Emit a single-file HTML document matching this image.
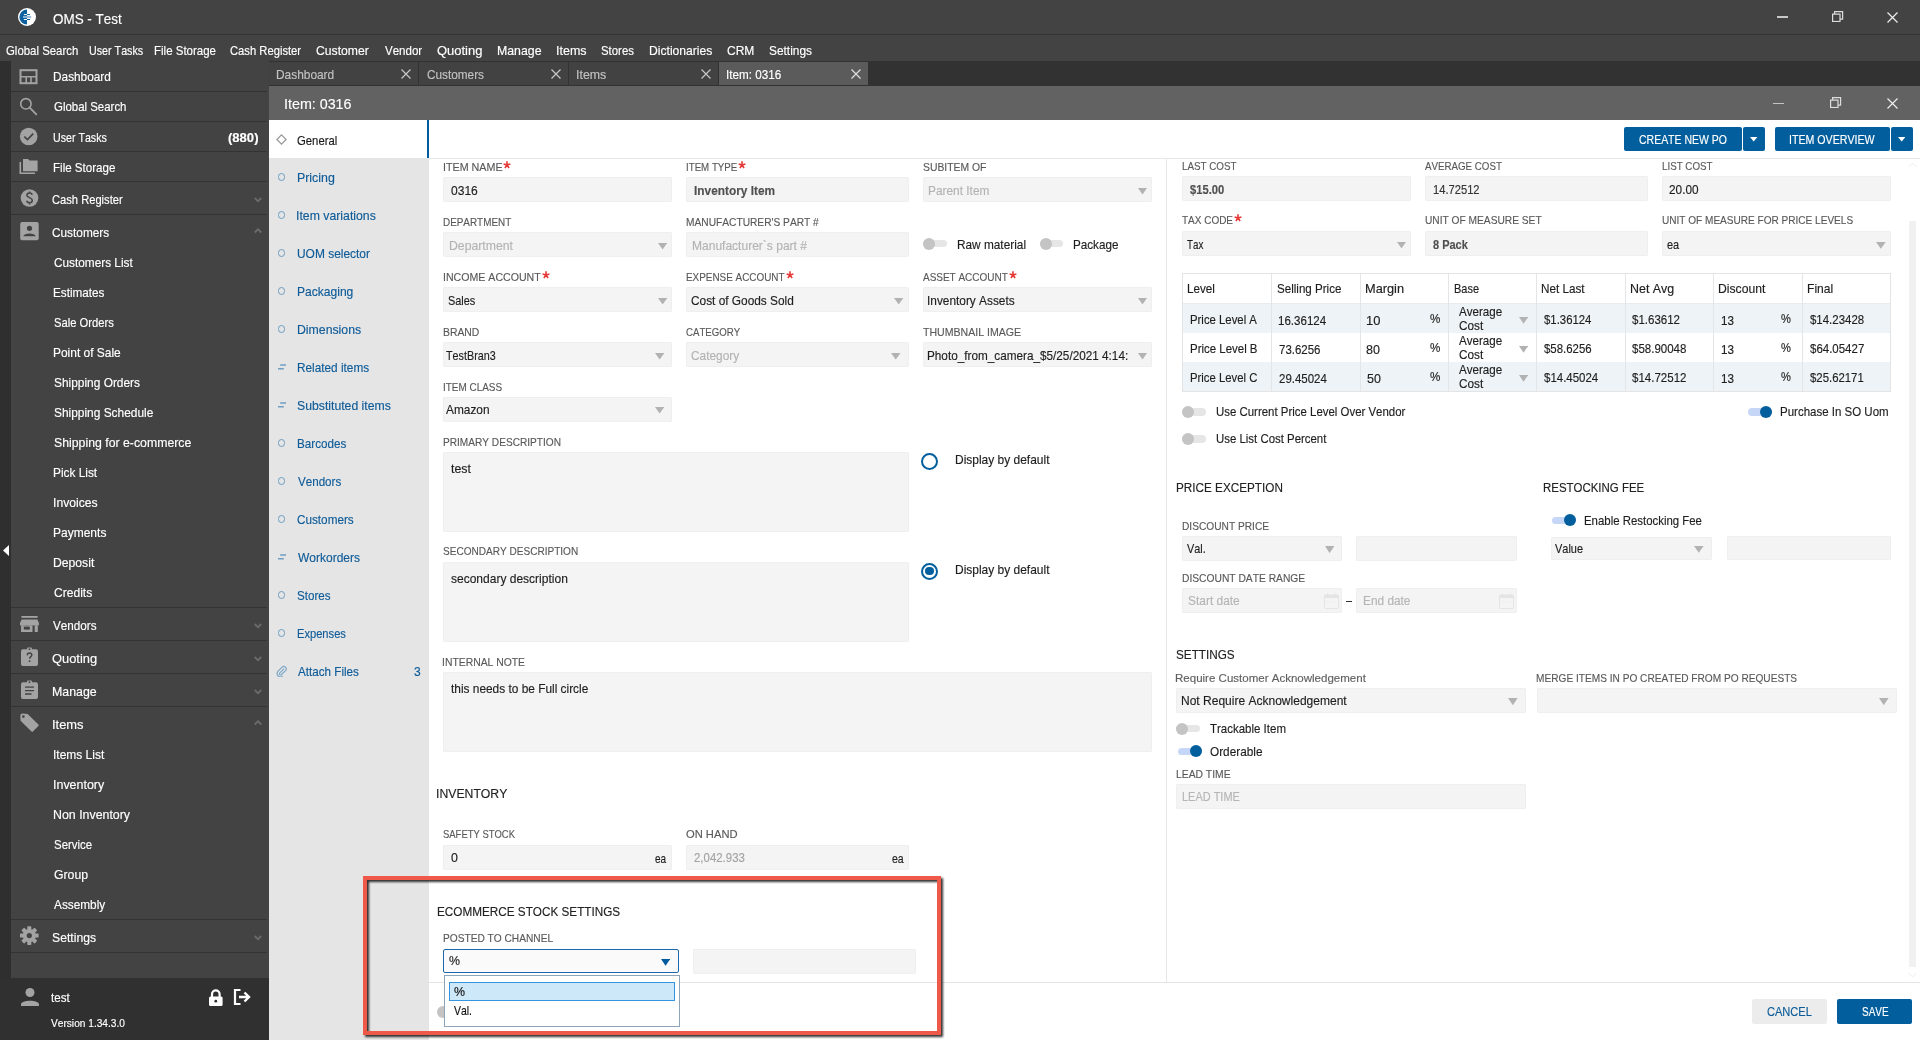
<!DOCTYPE html>
<html><head><meta charset="utf-8">
<style>
*{margin:0;padding:0;box-sizing:border-box}
html,body{width:1920px;height:1040px;overflow:hidden;background:#fff;font-family:"Liberation Sans",sans-serif;}
.a{position:absolute}
.t{position:absolute;white-space:nowrap;line-height:1;font-kerning:none;-webkit-text-stroke:0.15px currentColor}
</style></head><body>
<div class="a" style="left:0px;top:0px;width:1920px;height:34px;background:#434343;"></div>
<div class="a" style="left:0px;top:34px;width:1920px;height:1px;background:#333333;"></div>
<div class="a" style="left:0px;top:35px;width:1920px;height:26px;background:#434343;"></div>
<svg class="a" style="left:18px;top:8px" width="18" height="18" viewBox="0 0 18 18"><circle cx="9" cy="9" r="9" fill="#fff"/><path d="M9 1.4 A7.6 7.6 0 0 0 9 16.6 Z" fill="#0b60a0"/><path d="M5.9 6.6 H9 M5 9 H9 M5.9 11.5 H9" stroke="#fff" stroke-width="1"/><path d="M9 6.6 H12 M9 11.5 H12" stroke="#0b60a0" stroke-width="1"/><path d="M9 9 H13.2" stroke="#5b8fc0" stroke-width="1.2"/></svg>
<div class="t" style="left:53.36px;top:12.15px;font-size:14px;color:#fff;transform:scaleX(0.9605);transform-origin:0 0;">OMS - Test</div>
<div class="a" style="left:1777px;top:16px;width:11px;height:1.8000000000000007px;background:#c8c8c8;"></div>
<svg class="a" style="left:1832px;top:11px" width="12" height="11" viewBox="0 0 12 11"><rect x="0.6" y="3.1" width="7.4" height="7.4" fill="none" stroke="#ddd" stroke-width="1.2"/><path d="M2.6 3.1 V0.6 H10.6 V8.2 H8" fill="none" stroke="#ddd" stroke-width="1.2"/></svg>
<svg class="a" style="left:1887px;top:12px" width="11" height="11" viewBox="0 0 11 11"><path d="M0.5 0.5 L10.5 10.5 M10.5 0.5 L0.5 10.5" stroke="#eee" stroke-width="1.2"/></svg>
<div class="t" style="left:5.93px;top:44.50px;font-size:12.4px;color:#fff;transform:scaleX(0.9203);transform-origin:0 0;">Global Search</div>
<div class="t" style="left:89.17px;top:44.50px;font-size:12.4px;color:#fff;transform:scaleX(0.8647);transform-origin:0 0;">User Tasks</div>
<div class="t" style="left:154.46px;top:44.50px;font-size:12.4px;color:#fff;transform:scaleX(0.9282);transform-origin:0 0;">File Storage</div>
<div class="t" style="left:229.83px;top:44.50px;font-size:12.4px;color:#fff;transform:scaleX(0.9057);transform-origin:0 0;">Cash Register</div>
<div class="t" style="left:316.38px;top:44.50px;font-size:12.4px;color:#fff;transform:scaleX(0.9828);transform-origin:0 0;">Customer</div>
<div class="t" style="left:384.95px;top:44.50px;font-size:12.4px;color:#fff;transform:scaleX(0.9314);transform-origin:0 0;">Vendor</div>
<div class="t" style="left:436.89px;top:44.50px;font-size:12.4px;color:#fff;transform:scaleX(1.0465);transform-origin:0 0;">Quoting</div>
<div class="t" style="left:496.99px;top:44.50px;font-size:12.4px;color:#fff;transform:scaleX(0.9944);transform-origin:0 0;">Manage</div>
<div class="t" style="left:555.64px;top:44.50px;font-size:12.4px;color:#fff;transform:scaleX(1.0096);transform-origin:0 0;">Items</div>
<div class="t" style="left:601.28px;top:44.50px;font-size:12.4px;color:#fff;transform:scaleX(0.9188);transform-origin:0 0;">Stores</div>
<div class="t" style="left:649.00px;top:44.50px;font-size:12.4px;color:#fff;transform:scaleX(0.9792);transform-origin:0 0;">Dictionaries</div>
<div class="t" style="left:727.39px;top:44.50px;font-size:12.4px;color:#fff;transform:scaleX(0.9702);transform-origin:0 0;">CRM</div>
<div class="t" style="left:769.46px;top:44.50px;font-size:12.4px;color:#fff;transform:scaleX(0.9590);transform-origin:0 0;">Settings</div>
<div class="a" style="left:0px;top:61px;width:11px;height:979px;background:#2f2f2f;"></div>
<div class="a" style="left:11px;top:61px;width:258px;height:917px;background:#434343;"></div>
<div class="a" style="left:0px;top:978px;width:269px;height:62px;background:#303030;"></div>
<div class="a" style="left:269px;top:61px;width:1651px;height:25px;background:#323232;"></div>
<div class="a" style="left:269px;top:86px;width:1651px;height:34px;background:#626262;"></div>
<div class="t" style="left:284.28px;top:96.90px;font-size:14.3px;color:#fff;transform:scaleX(0.9990);transform-origin:0 0;">Item: 0316</div>
<div class="a" style="left:1773px;top:102.6px;width:11px;height:1.8000000000000114px;background:#c4c4c4;"></div>
<svg class="a" style="left:1830px;top:97px" width="12" height="11" viewBox="0 0 12 11"><rect x="0.6" y="3.1" width="7.4" height="7.4" fill="none" stroke="#ddd" stroke-width="1.2"/><path d="M2.6 3.1 V0.6 H10.6 V8.2 H8" fill="none" stroke="#ddd" stroke-width="1.2"/></svg>
<svg class="a" style="left:1887px;top:98px" width="11" height="11" viewBox="0 0 11 11"><path d="M0.5 0.5 L10.5 10.5 M10.5 0.5 L0.5 10.5" stroke="#eee" stroke-width="1.2"/></svg>
<div class="a" style="left:269px;top:120px;width:160px;height:920px;background:#e5e5e5;"></div>
<div class="a" style="left:11px;top:91px;width:256px;height:1px;background:#333333;"></div>
<div class="a" style="left:11px;top:121px;width:256px;height:1px;background:#333333;"></div>
<div class="a" style="left:11px;top:151px;width:256px;height:1px;background:#333333;"></div>
<div class="a" style="left:11px;top:181px;width:256px;height:1px;background:#333333;"></div>
<div class="a" style="left:11px;top:214px;width:256px;height:1px;background:#333333;"></div>
<div class="a" style="left:11px;top:607px;width:256px;height:1px;background:#333333;"></div>
<div class="a" style="left:11px;top:640px;width:256px;height:1px;background:#333333;"></div>
<div class="a" style="left:11px;top:673px;width:256px;height:1px;background:#333333;"></div>
<div class="a" style="left:11px;top:706px;width:256px;height:1px;background:#333333;"></div>
<div class="a" style="left:11px;top:919px;width:256px;height:1px;background:#333333;"></div>
<div class="a" style="left:11px;top:952px;width:256px;height:1px;background:#333333;"></div>
<svg class="a" style="left:19px;top:69px" width="20" height="16" viewBox="0 0 20 16"><rect x="1.5" y="1.2" width="16" height="13" fill="none" stroke="#a3a3a3" stroke-width="2"/><path d="M1.5 7.8 H17.5 M7.2 7.8 V14 M12 7.8 V14" stroke="#a3a3a3" stroke-width="1.6"/></svg>
<div class="t" style="left:53.43px;top:70.50px;font-size:12.4px;color:#fff;transform:scaleX(0.9550);transform-origin:0 0;">Dashboard</div>
<svg class="a" style="left:19px;top:97px" width="20" height="20" viewBox="0 0 20 20"><circle cx="6.9" cy="6.8" r="5.2" fill="none" stroke="#a3a3a3" stroke-width="1.6"/><path d="M10.7 10.6 L17.3 17.4" stroke="#a3a3a3" stroke-width="1.8" stroke-linecap="round"/></svg>
<div class="t" style="left:53.72px;top:100.50px;font-size:12.4px;color:#fff;transform:scaleX(0.9229);transform-origin:0 0;">Global Search</div>
<svg class="a" style="left:19px;top:127px" width="20" height="20" viewBox="0 0 20 20"><circle cx="9.7" cy="9.5" r="8.8" fill="#a3a3a3"/><path d="M5.3 9.6 L8.5 12.6 L14.2 6.6" fill="none" stroke="#434343" stroke-width="1.7"/></svg>
<div class="t" style="left:53.43px;top:131.50px;font-size:12.4px;color:#fff;transform:scaleX(0.8582);transform-origin:0 0;">User Tasks</div>
<svg class="a" style="left:19px;top:158px" width="20" height="17" viewBox="0 0 20 17"><path d="M1.3 4 V15.3 H16" fill="none" stroke="#a3a3a3" stroke-width="1.6"/><path d="M4 1 H9 L10.5 2.5 H18.6 V13.3 H4 Z" fill="#a3a3a3"/></svg>
<div class="t" style="left:53.30px;top:161.50px;font-size:12.4px;color:#fff;transform:scaleX(0.9343);transform-origin:0 0;">File Storage</div>
<svg class="a" style="left:20px;top:189px" width="20" height="19" viewBox="0 0 20 19"><circle cx="9.5" cy="9" r="8.8" fill="#a3a3a3"/><path d="M12.3 5.7 C11.8 4.4 10.8 4 9.5 4 C7.8 4 6.9 5 6.9 6.3 C6.9 9 12.3 8.3 12.3 11.3 C12.3 12.8 11.1 13.8 9.5 13.8 C8 13.8 7 13.2 6.6 11.8 M9.5 2.6 V4 M9.5 13.8 V15.4" fill="none" stroke="#434343" stroke-width="1.5"/></svg>
<div class="t" style="left:52.33px;top:193.50px;font-size:12.4px;color:#fff;transform:scaleX(0.9006);transform-origin:0 0;">Cash Register</div>
<svg class="a" style="left:253.6px;top:196.5px" width="8" height="6" viewBox="0 0 8 6"><path d="M0.8 1 L4 4.3 L7.2 1" fill="none" stroke="#6c6c6c" stroke-width="1.8"/></svg>
<svg class="a" style="left:20px;top:222px" width="19" height="19" viewBox="0 0 19 19"><rect x="0.2" y="0" width="18.5" height="18.2" rx="2" fill="#a3a3a3"/><circle cx="9.5" cy="6.3" r="2.6" fill="#434343"/><path d="M3.3 14.3 C4 10.6 15 10.6 15.7 14.3 Z" fill="#434343"/></svg>
<div class="t" style="left:52.30px;top:226.50px;font-size:12.4px;color:#fff;transform:scaleX(0.9547);transform-origin:0 0;">Customers</div>
<svg class="a" style="left:253.6px;top:227.5px" width="8" height="6" viewBox="0 0 8 6"><path d="M0.8 4.5 L4 1.2 L7.2 4.5" fill="none" stroke="#6c6c6c" stroke-width="1.8"/></svg>
<svg class="a" style="left:20px;top:615px" width="20" height="18" viewBox="0 0 20 18"><rect x="1.4" y="1" width="16.2" height="1.8" fill="#a3a3a3"/><path d="M1.6 4.4 H17.4 L18.9 8 V10.6 H0 V8 Z" fill="#a3a3a3"/><path d="M2 10.6 V16.2 H11.5 V10.6 M4 10.6 V13.8 H9.5 V10.6 M15.5 10.6 V16.9 M16.8 10.6 V16.9" fill="none" stroke="#a3a3a3" stroke-width="1.6"/><rect x="1.3" y="10.6" width="11" height="6.3" fill="#a3a3a3"/><rect x="3.8" y="11.6" width="6" height="3" fill="#434343"/><rect x="15" y="10.6" width="2.5" height="6.3" fill="#a3a3a3"/></svg>
<div class="t" style="left:52.95px;top:619.50px;font-size:12.4px;color:#fff;transform:scaleX(0.9435);transform-origin:0 0;">Vendors</div>
<svg class="a" style="left:253.6px;top:622.5px" width="8" height="6" viewBox="0 0 8 6"><path d="M0.8 1 L4 4.3 L7.2 1" fill="none" stroke="#6c6c6c" stroke-width="1.8"/></svg>
<svg class="a" style="left:21px;top:647px" width="18" height="20" viewBox="0 0 18 20"><rect x="0" y="2.2" width="17" height="16.8" rx="2" fill="#a3a3a3"/><rect x="6" y="0.6" width="5" height="3" rx="1" fill="#a3a3a3"/><circle cx="8.5" cy="2.2" r="0.9" fill="#434343"/><path d="M6.2 8.2 C6.2 6.6 7.3 6 8.5 6 C9.8 6 10.8 6.8 10.8 8 C10.8 9.6 8.6 9.7 8.6 11.8" fill="none" stroke="#434343" stroke-width="1.4"/><circle cx="8.6" cy="14.2" r="0.9" fill="#434343"/></svg>
<div class="t" style="left:52.39px;top:652.50px;font-size:12.4px;color:#fff;transform:scaleX(1.0394);transform-origin:0 0;">Quoting</div>
<svg class="a" style="left:253.6px;top:655.5px" width="8" height="6" viewBox="0 0 8 6"><path d="M0.8 1 L4 4.3 L7.2 1" fill="none" stroke="#6c6c6c" stroke-width="1.8"/></svg>
<svg class="a" style="left:21px;top:680px" width="18" height="20" viewBox="0 0 18 20"><rect x="0" y="2.2" width="17" height="16.8" rx="2" fill="#a3a3a3"/><rect x="6" y="0.6" width="5" height="3" rx="1" fill="#a3a3a3"/><circle cx="8.5" cy="2.2" r="0.9" fill="#434343"/><path d="M4 7.2 H13 M4 10.6 H13 M4 14 H10.5" stroke="#434343" stroke-width="1.3"/></svg>
<div class="t" style="left:51.99px;top:685.50px;font-size:12.4px;color:#fff;transform:scaleX(0.9967);transform-origin:0 0;">Manage</div>
<svg class="a" style="left:253.6px;top:688.5px" width="8" height="6" viewBox="0 0 8 6"><path d="M0.8 1 L4 4.3 L7.2 1" fill="none" stroke="#6c6c6c" stroke-width="1.8"/></svg>
<svg class="a" style="left:20px;top:713px" width="20" height="20" viewBox="0 0 20 20"><path d="M0.3 3 Q0.3 0.6 2.6 0.6 L7.6 0.9 L18.4 11.6 Q19 12.4 18.4 13.1 L12.9 18.6 Q12.2 19.2 11.5 18.6 L0.6 7.8 Z" fill="#a3a3a3"/><circle cx="3.4" cy="3.6" r="1.3" fill="#434343"/></svg>
<div class="t" style="left:51.81px;top:718.50px;font-size:12.4px;color:#fff;transform:scaleX(1.0410);transform-origin:0 0;">Items</div>
<svg class="a" style="left:253.6px;top:719.5px" width="8" height="6" viewBox="0 0 8 6"><path d="M0.8 4.5 L4 1.2 L7.2 4.5" fill="none" stroke="#6c6c6c" stroke-width="1.8"/></svg>
<svg class="a" style="left:20px;top:926px" width="19" height="20" viewBox="0 0 19 20"><g transform="translate(9.3,9.6)" fill="#a3a3a3"><circle r="6.6"/><rect x="-2" y="-9.3" width="4" height="4.5" rx="0.6" transform="rotate(0)"/><rect x="-2" y="-9.3" width="4" height="4.5" rx="0.6" transform="rotate(45)"/><rect x="-2" y="-9.3" width="4" height="4.5" rx="0.6" transform="rotate(90)"/><rect x="-2" y="-9.3" width="4" height="4.5" rx="0.6" transform="rotate(135)"/><rect x="-2" y="-9.3" width="4" height="4.5" rx="0.6" transform="rotate(180)"/><rect x="-2" y="-9.3" width="4" height="4.5" rx="0.6" transform="rotate(225)"/><rect x="-2" y="-9.3" width="4" height="4.5" rx="0.6" transform="rotate(270)"/><rect x="-2" y="-9.3" width="4" height="4.5" rx="0.6" transform="rotate(315)"/></g><circle cx="9.3" cy="9.6" r="2.6" fill="#434343"/></svg>
<div class="t" style="left:52.45px;top:931.50px;font-size:12.4px;color:#fff;transform:scaleX(0.9842);transform-origin:0 0;">Settings</div>
<svg class="a" style="left:253.6px;top:934.5px" width="8" height="6" viewBox="0 0 8 6"><path d="M0.8 1 L4 4.3 L7.2 1" fill="none" stroke="#6c6c6c" stroke-width="1.8"/></svg>
<div class="t" style="left:53.80px;top:256.50px;font-size:12.4px;color:#fff;transform:scaleX(0.9528);transform-origin:0 0;">Customers List</div>
<div class="t" style="left:53.44px;top:286.50px;font-size:12.4px;color:#fff;transform:scaleX(0.9458);transform-origin:0 0;">Estimates</div>
<div class="t" style="left:53.89px;top:316.50px;font-size:12.4px;color:#fff;transform:scaleX(0.9056);transform-origin:0 0;">Sale Orders</div>
<div class="t" style="left:53.42px;top:346.50px;font-size:12.4px;color:#fff;transform:scaleX(0.9644);transform-origin:0 0;">Point of Sale</div>
<div class="t" style="left:53.86px;top:376.50px;font-size:12.4px;color:#fff;transform:scaleX(0.9606);transform-origin:0 0;">Shipping Orders</div>
<div class="t" style="left:53.86px;top:406.50px;font-size:12.4px;color:#fff;transform:scaleX(0.9609);transform-origin:0 0;">Shipping Schedule</div>
<div class="t" style="left:53.84px;top:436.50px;font-size:12.4px;color:#fff;transform:scaleX(0.9919);transform-origin:0 0;">Shipping for e-commerce</div>
<div class="t" style="left:53.43px;top:466.50px;font-size:12.4px;color:#fff;transform:scaleX(0.9565);transform-origin:0 0;">Pick List</div>
<div class="t" style="left:53.28px;top:496.50px;font-size:12.4px;color:#fff;transform:scaleX(0.9819);transform-origin:0 0;">Invoices</div>
<div class="t" style="left:53.41px;top:526.50px;font-size:12.4px;color:#fff;transform:scaleX(0.9689);transform-origin:0 0;">Payments</div>
<div class="t" style="left:53.40px;top:556.50px;font-size:12.4px;color:#fff;transform:scaleX(0.9820);transform-origin:0 0;">Deposit</div>
<div class="t" style="left:53.79px;top:586.50px;font-size:12.4px;color:#fff;transform:scaleX(0.9738);transform-origin:0 0;">Credits</div>
<div class="t" style="left:53.29px;top:748.50px;font-size:12.4px;color:#fff;transform:scaleX(0.9668);transform-origin:0 0;">Items List</div>
<div class="t" style="left:53.25px;top:778.50px;font-size:12.4px;color:#fff;transform:scaleX(1.0053);transform-origin:0 0;">Inventory</div>
<div class="t" style="left:53.38px;top:808.50px;font-size:12.4px;color:#fff;transform:scaleX(0.9990);transform-origin:0 0;">Non Inventory</div>
<div class="t" style="left:53.88px;top:838.50px;font-size:12.4px;color:#fff;transform:scaleX(0.9246);transform-origin:0 0;">Service</div>
<div class="t" style="left:53.78px;top:868.50px;font-size:12.4px;color:#fff;transform:scaleX(0.9874);transform-origin:0 0;">Group</div>
<div class="t" style="left:54.38px;top:898.50px;font-size:12.4px;color:#fff;transform:scaleX(0.9535);transform-origin:0 0;">Assembly</div>
<div class="t" style="left:227.65px;top:131.50px;font-size:12.4px;color:#fff;font-weight:bold;transform:scaleX(1.0537);transform-origin:0 0;">(880)</div>
<svg class="a" style="left:3px;top:545px" width="6" height="11" viewBox="0 0 6 11"><path d="M6 0 V11 L0 5.5 Z" fill="#fff"/></svg>
<svg class="a" style="left:21px;top:987px" width="19" height="20" viewBox="0 0 19 20"><circle cx="9" cy="5.5" r="4.5" fill="#a3a3a3"/><path d="M0 19 V17.5 C0 12.5 18 12.5 18 17.5 V19 Z" fill="#a3a3a3"/></svg>
<div class="t" style="left:51.12px;top:991.50px;font-size:12.4px;color:#fff;transform:scaleX(0.9336);transform-origin:0 0;">test</div>
<div class="t" style="left:51.26px;top:1017.86px;font-size:10.8px;color:#fff;transform:scaleX(0.9401);transform-origin:0 0;">Version 1.34.3.0</div>
<svg class="a" style="left:208px;top:989px" width="16" height="18" viewBox="0 0 16 18"><path d="M4 8 V5.2 A3.8 3.8 0 0 1 11.6 5.2 V8" fill="none" stroke="#fff" stroke-width="2.2"/><rect x="1" y="7.5" width="13.6" height="9.5" rx="1.5" fill="#fff"/><circle cx="7.8" cy="12.2" r="1.4" fill="#303030"/></svg>
<svg class="a" style="left:233px;top:988px" width="19" height="18" viewBox="0 0 19 18"><path d="M7.5 2 H2 V16 H7.5" fill="none" stroke="#fff" stroke-width="2.2"/><path d="M6 9 H15.5 M11.5 4.5 L16 9 L11.5 13.5" fill="none" stroke="#fff" stroke-width="2.4"/></svg>
<div class="a" style="left:269px;top:62px;width:149px;height:23px;background:#424242;"></div>
<div class="t" style="left:276.32px;top:68.50px;font-size:12.4px;color:#c2c2c2;transform:scaleX(0.9601);transform-origin:0 0;">Dashboard</div>
<svg class="a" style="left:401px;top:69px" width="10" height="10" viewBox="0 0 10 10"><path d="M0.5 0.5 L9.5 9.5 M9.5 0.5 L0.5 9.5" stroke="#c8c8c8" stroke-width="1.2"/></svg>
<div class="a" style="left:419px;top:62px;width:149px;height:23px;background:#424242;"></div>
<div class="t" style="left:426.90px;top:68.50px;font-size:12.4px;color:#c2c2c2;transform:scaleX(0.9513);transform-origin:0 0;">Customers</div>
<svg class="a" style="left:551.3px;top:69px" width="10" height="10" viewBox="0 0 10 10"><path d="M0.5 0.5 L9.5 9.5 M9.5 0.5 L0.5 9.5" stroke="#c8c8c8" stroke-width="1.2"/></svg>
<div class="a" style="left:569px;top:62px;width:149px;height:23px;background:#424242;"></div>
<div class="t" style="left:575.86px;top:68.50px;font-size:12.4px;color:#c2c2c2;transform:scaleX(0.9990);transform-origin:0 0;">Items</div>
<svg class="a" style="left:701.3px;top:69px" width="10" height="10" viewBox="0 0 10 10"><path d="M0.5 0.5 L9.5 9.5 M9.5 0.5 L0.5 9.5" stroke="#c8c8c8" stroke-width="1.2"/></svg>
<div class="a" style="left:719px;top:62px;width:149px;height:23px;background:#5b5b5b;"></div>
<div class="t" style="left:725.92px;top:68.50px;font-size:12.4px;color:#fff;transform:scaleX(0.9437);transform-origin:0 0;">Item: 0316</div>
<svg class="a" style="left:851.3px;top:69px" width="10" height="10" viewBox="0 0 10 10"><path d="M0.5 0.5 L9.5 9.5 M9.5 0.5 L0.5 9.5" stroke="#e0e0e0" stroke-width="1.2"/></svg>
<div class="a" style="left:269px;top:120px;width:158px;height:38px;background:#fff;"></div>
<div class="a" style="left:427px;top:120px;width:2px;height:38px;background:#005a9e;"></div>
<svg class="a" style="left:276px;top:134px" width="11" height="11" viewBox="0 0 11 11"><path d="M5.5 0.9 L10.1 5.5 L5.5 10.1 L0.9 5.5 Z" fill="none" stroke="#9a9a9a" stroke-width="1.3"/></svg>
<div class="t" style="left:297.03px;top:134.50px;font-size:12.4px;color:#1a1a1a;transform:scaleX(0.9142);transform-origin:0 0;">General</div>
<div class="a" style="left:277.7px;top:173.4px;width:7.6px;height:7.6px;border:1.7px solid #6a9cc0;border-radius:50%"></div>
<div class="t" style="left:296.59px;top:171.50px;font-size:12.4px;color:#0e5b98;transform:scaleX(0.9976);transform-origin:0 0;">Pricing</div>
<div class="a" style="left:277.7px;top:211.4px;width:7.6px;height:7.6px;border:1.7px solid #6a9cc0;border-radius:50%"></div>
<div class="t" style="left:296.47px;top:209.50px;font-size:12.4px;color:#0e5b98;transform:scaleX(0.9907);transform-origin:0 0;">Item variations</div>
<div class="a" style="left:277.7px;top:249.4px;width:7.6px;height:7.6px;border:1.7px solid #6a9cc0;border-radius:50%"></div>
<div class="t" style="left:296.68px;top:247.50px;font-size:12.4px;color:#0e5b98;transform:scaleX(0.9634);transform-origin:0 0;">UOM selector</div>
<div class="a" style="left:277.7px;top:287.4px;width:7.6px;height:7.6px;border:1.7px solid #6a9cc0;border-radius:50%"></div>
<div class="t" style="left:296.61px;top:285.50px;font-size:12.4px;color:#0e5b98;transform:scaleX(0.9734);transform-origin:0 0;">Packaging</div>
<div class="a" style="left:277.7px;top:325.4px;width:7.6px;height:7.6px;border:1.7px solid #6a9cc0;border-radius:50%"></div>
<div class="t" style="left:296.59px;top:323.50px;font-size:12.4px;color:#0e5b98;transform:scaleX(0.9903);transform-origin:0 0;">Dimensions</div>
<svg class="a" style="left:277px;top:363.2px" width="10" height="8" viewBox="0 0 10 8"><path d="M3.2 2 H9 M1 5.8 H6.8" stroke="#6f9fc2" stroke-width="1.4"/></svg>
<div class="t" style="left:296.63px;top:361.50px;font-size:12.4px;color:#0e5b98;transform:scaleX(0.9523);transform-origin:0 0;">Related items</div>
<svg class="a" style="left:277px;top:401.2px" width="10" height="8" viewBox="0 0 10 8"><path d="M3.2 2 H9 M1 5.8 H6.8" stroke="#6f9fc2" stroke-width="1.4"/></svg>
<div class="t" style="left:297.04px;top:399.50px;font-size:12.4px;color:#0e5b98;transform:scaleX(0.9872);transform-origin:0 0;">Substituted items</div>
<div class="a" style="left:277.7px;top:439.4px;width:7.6px;height:7.6px;border:1.7px solid #6a9cc0;border-radius:50%"></div>
<div class="t" style="left:296.64px;top:437.50px;font-size:12.4px;color:#0e5b98;transform:scaleX(0.9407);transform-origin:0 0;">Barcodes</div>
<div class="a" style="left:277.7px;top:477.4px;width:7.6px;height:7.6px;border:1.7px solid #6a9cc0;border-radius:50%"></div>
<div class="t" style="left:297.55px;top:475.50px;font-size:12.4px;color:#0e5b98;transform:scaleX(0.9369);transform-origin:0 0;">Vendors</div>
<div class="a" style="left:277.7px;top:515.4px;width:7.6px;height:7.6px;border:1.7px solid #6a9cc0;border-radius:50%"></div>
<div class="t" style="left:297.00px;top:513.50px;font-size:12.4px;color:#0e5b98;transform:scaleX(0.9462);transform-origin:0 0;">Customers</div>
<svg class="a" style="left:277px;top:553.2px" width="10" height="8" viewBox="0 0 10 8"><path d="M3.2 2 H9 M1 5.8 H6.8" stroke="#6f9fc2" stroke-width="1.4"/></svg>
<div class="t" style="left:297.55px;top:551.50px;font-size:12.4px;color:#0e5b98;transform:scaleX(0.9689);transform-origin:0 0;">Workorders</div>
<div class="a" style="left:277.7px;top:591.4px;width:7.6px;height:7.6px;border:1.7px solid #6a9cc0;border-radius:50%"></div>
<div class="t" style="left:297.07px;top:589.50px;font-size:12.4px;color:#0e5b98;transform:scaleX(0.9361);transform-origin:0 0;">Stores</div>
<div class="a" style="left:277.7px;top:629.4px;width:7.6px;height:7.6px;border:1.7px solid #6a9cc0;border-radius:50%"></div>
<div class="t" style="left:296.69px;top:627.50px;font-size:12.4px;color:#0e5b98;transform:scaleX(0.8983);transform-origin:0 0;">Expenses</div>
<svg class="a" style="left:276px;top:665.2px" width="11" height="12" viewBox="0 0 13 14"><path d="M9.6 4.2 L4.3 9.5 A1.4 1.4 0 0 0 6.3 11.4 L11.2 6.5 A2.8 2.8 0 0 0 7.2 2.5 L2.2 7.5 A4.1 4.1 0 0 0 8 13.2" fill="none" stroke="#7da8c7" stroke-width="1.4"/></svg>
<div class="t" style="left:297.58px;top:665.50px;font-size:12.4px;color:#0e5b98;transform:scaleX(0.9408);transform-origin:0 0;">Attach Files</div>
<div class="t" style="left:414.04px;top:665.50px;font-size:12.4px;color:#0e5b98;transform:scaleX(0.9695);transform-origin:0 0;">3</div>
<div class="a" style="left:429px;top:158px;width:1491px;height:1px;background:#e8e8e8;"></div>
<div class="a" style="left:1624px;top:127px;width:118px;height:24px;background:#035e9d;border-radius:2px;"></div>
<div class="a" style="left:1743px;top:127px;width:22px;height:24px;background:#035e9d;border-radius:2px;"></div>
<svg class="a" style="left:1750.3px;top:137.3px" width="7.40" height="4.50" viewBox="0 0 10 7" preserveAspectRatio="none"><path d="M0 0 H10 L5 7 Z" fill="#fff"/></svg>
<div class="t" style="left:1638.87px;top:133.67px;font-size:12.2px;color:#fff;transform:scaleX(0.8601);transform-origin:0 0;">CREATE NEW PO</div>
<div class="a" style="left:1775px;top:127px;width:115px;height:24px;background:#035e9d;border-radius:2px;"></div>
<div class="a" style="left:1891px;top:127px;width:22px;height:24px;background:#035e9d;border-radius:2px;"></div>
<svg class="a" style="left:1898.1px;top:137.3px" width="7.40" height="4.50" viewBox="0 0 10 7" preserveAspectRatio="none"><path d="M0 0 H10 L5 7 Z" fill="#fff"/></svg>
<div class="t" style="left:1789.22px;top:133.67px;font-size:12.2px;color:#fff;transform:scaleX(0.8721);transform-origin:0 0;">ITEM OVERVIEW</div>
<div class="a" style="left:1166px;top:159px;width:1px;height:823px;background:#e6e6e6;"></div>
<div class="t" style="left:442.71px;top:162.35px;font-size:11.4px;color:#595959;transform:scaleX(0.9419);transform-origin:0 0;">ITEM NAME</div><svg class="a" style="left:503.4px;top:160.5px" width="8" height="8" viewBox="0 0 8 8"><path d="M4 0.3 V4 M4 4 L0.6 2.9 M4 4 L7.4 2.9 M4 4 L1.9 7 M4 4 L6.1 7" stroke="#e53935" stroke-width="1.6"/></svg>
<div class="a" style="left:443px;top:177px;width:229px;height:25px;background:#f4f4f4;border-radius:2px;box-shadow:inset 0 0 0 1px #efefef;"></div>
<div class="t" style="left:450.53px;top:184.50px;font-size:12.4px;color:#1e1e1e;transform:scaleX(0.9715);transform-origin:0 0;">0316</div>
<div class="t" style="left:685.60px;top:162.35px;font-size:11.4px;color:#595959;transform:scaleX(0.8528);transform-origin:0 0;">ITEM TYPE</div><svg class="a" style="left:738.0px;top:160.5px" width="8" height="8" viewBox="0 0 8 8"><path d="M4 0.3 V4 M4 4 L0.6 2.9 M4 4 L7.4 2.9 M4 4 L1.9 7 M4 4 L6.1 7" stroke="#e53935" stroke-width="1.6"/></svg>
<div class="a" style="left:686px;top:177px;width:223px;height:25px;background:#f4f4f4;border-radius:2px;box-shadow:inset 0 0 0 1px #efefef;"></div>
<div class="t" style="left:693.91px;top:184.50px;font-size:12.4px;color:#505050;font-weight:bold;transform:scaleX(0.9572);transform-origin:0 0;">Inventory Item</div>
<div class="t" style="left:922.83px;top:162.35px;font-size:11.4px;color:#595959;transform:scaleX(0.9098);transform-origin:0 0;">SUBITEM OF</div>
<div class="a" style="left:923px;top:177px;width:229px;height:25px;background:#f4f4f4;border-radius:2px;box-shadow:inset 0 0 0 1px #efefef;"></div>
<div class="t" style="left:928.32px;top:184.50px;font-size:12.4px;color:#b3b3b3;transform:scaleX(0.9589);transform-origin:0 0;">Parent Item</div>
<svg class="a" style="left:1138px;top:188px" width="9.00" height="6.50" viewBox="0 0 10 7" preserveAspectRatio="none"><path d="M0 0 H10 L5 7 Z" fill="#b2b2b2"/></svg>
<div class="t" style="left:442.89px;top:217.35px;font-size:11.4px;color:#595959;transform:scaleX(0.8689);transform-origin:0 0;">DEPARTMENT</div>
<div class="a" style="left:443px;top:232px;width:229px;height:25px;background:#f4f4f4;border-radius:2px;box-shadow:inset 0 0 0 1px #efefef;"></div>
<div class="t" style="left:448.70px;top:239.50px;font-size:12.4px;color:#b3b3b3;transform:scaleX(0.9878);transform-origin:0 0;">Department</div>
<svg class="a" style="left:657.8px;top:243px" width="9.20" height="6.60" viewBox="0 0 10 7" preserveAspectRatio="none"><path d="M0 0 H10 L5 7 Z" fill="#b2b2b2"/></svg>
<div class="t" style="left:685.66px;top:217.35px;font-size:11.4px;color:#595959;transform:scaleX(0.8949);transform-origin:0 0;">MANUFACTURER'S PART #</div>
<div class="a" style="left:686px;top:232px;width:223px;height:25px;background:#f4f4f4;border-radius:2px;box-shadow:inset 0 0 0 1px #efefef;"></div>
<div class="t" style="left:691.71px;top:239.50px;font-size:12.4px;color:#b3b3b3;transform:scaleX(0.9705);transform-origin:0 0;">Manufacturer`s part #</div>
<div class="a" style="left:923px;top:240.1px;width:24px;height:7.199999999999989px;background:#e6e6e6;border-radius:4px;"></div><div class="a" style="left:923px;top:237.7px;width:12px;height:12px;border-radius:50%;background:#c4c4c4"></div>
<div class="t" style="left:956.63px;top:238.50px;font-size:12.4px;color:#1e1e1e;transform:scaleX(0.9545);transform-origin:0 0;">Raw material</div>
<div class="a" style="left:1039.7px;top:240.1px;width:23.799999999999955px;height:7.199999999999989px;background:#e6e6e6;border-radius:4px;"></div><div class="a" style="left:1039.7px;top:237.7px;width:12px;height:12px;border-radius:50%;background:#c4c4c4"></div>
<div class="t" style="left:1073.24px;top:238.50px;font-size:12.4px;color:#1e1e1e;transform:scaleX(0.9424);transform-origin:0 0;">Package</div>
<div class="t" style="left:442.62px;top:272.35px;font-size:11.4px;color:#595959;transform:scaleX(0.9305);transform-origin:0 0;">INCOME ACCOUNT</div><svg class="a" style="left:541.7px;top:270.5px" width="8" height="8" viewBox="0 0 8 8"><path d="M4 0.3 V4 M4 4 L0.6 2.9 M4 4 L7.4 2.9 M4 4 L1.9 7 M4 4 L6.1 7" stroke="#e53935" stroke-width="1.6"/></svg>
<div class="a" style="left:443px;top:287px;width:229px;height:25px;background:#f4f4f4;border-radius:2px;box-shadow:inset 0 0 0 1px #efefef;"></div>
<div class="t" style="left:447.50px;top:294.50px;font-size:12.4px;color:#1e1e1e;transform:scaleX(0.8798);transform-origin:0 0;">Sales</div>
<svg class="a" style="left:658px;top:298px" width="9.30" height="6.40" viewBox="0 0 10 7" preserveAspectRatio="none"><path d="M0 0 H10 L5 7 Z" fill="#b2b2b2"/></svg>
<div class="t" style="left:685.69px;top:272.35px;font-size:11.4px;color:#595959;transform:scaleX(0.8699);transform-origin:0 0;">EXPENSE ACCOUNT</div><svg class="a" style="left:785.6px;top:270.5px" width="8" height="8" viewBox="0 0 8 8"><path d="M4 0.3 V4 M4 4 L0.6 2.9 M4 4 L7.4 2.9 M4 4 L1.9 7 M4 4 L6.1 7" stroke="#e53935" stroke-width="1.6"/></svg>
<div class="a" style="left:686px;top:287px;width:223px;height:25px;background:#f4f4f4;border-radius:2px;box-shadow:inset 0 0 0 1px #efefef;"></div>
<div class="t" style="left:690.90px;top:294.50px;font-size:12.4px;color:#1e1e1e;transform:scaleX(0.9567);transform-origin:0 0;">Cost of Goods Sold</div>
<svg class="a" style="left:894.3px;top:298px" width="9.40" height="6.40" viewBox="0 0 10 7" preserveAspectRatio="none"><path d="M0 0 H10 L5 7 Z" fill="#b2b2b2"/></svg>
<div class="t" style="left:923.28px;top:272.35px;font-size:11.4px;color:#595959;transform:scaleX(0.8755);transform-origin:0 0;">ASSET ACCOUNT</div><svg class="a" style="left:1009.4px;top:270.5px" width="8" height="8" viewBox="0 0 8 8"><path d="M4 0.3 V4 M4 4 L0.6 2.9 M4 4 L7.4 2.9 M4 4 L1.9 7 M4 4 L6.1 7" stroke="#e53935" stroke-width="1.6"/></svg>
<div class="a" style="left:923px;top:287px;width:229px;height:25px;background:#f4f4f4;border-radius:2px;box-shadow:inset 0 0 0 1px #efefef;"></div>
<div class="t" style="left:926.80px;top:294.50px;font-size:12.4px;color:#1e1e1e;transform:scaleX(0.9570);transform-origin:0 0;">Inventory Assets</div>
<svg class="a" style="left:1138px;top:298px" width="9.00" height="6.40" viewBox="0 0 10 7" preserveAspectRatio="none"><path d="M0 0 H10 L5 7 Z" fill="#b2b2b2"/></svg>
<div class="t" style="left:442.75px;top:327.35px;font-size:11.4px;color:#595959;transform:scaleX(0.9109);transform-origin:0 0;">BRAND</div>
<div class="a" style="left:443px;top:342px;width:229px;height:25px;background:#f4f4f4;border-radius:2px;box-shadow:inset 0 0 0 1px #efefef;"></div>
<div class="t" style="left:446.26px;top:349.50px;font-size:12.4px;color:#1e1e1e;transform:scaleX(0.8691);transform-origin:0 0;">TestBran3</div>
<svg class="a" style="left:655px;top:353.3px" width="9.30" height="6.50" viewBox="0 0 10 7" preserveAspectRatio="none"><path d="M0 0 H10 L5 7 Z" fill="#b2b2b2"/></svg>
<div class="t" style="left:686.01px;top:327.35px;font-size:11.4px;color:#595959;transform:scaleX(0.8473);transform-origin:0 0;">CATEGORY</div>
<div class="a" style="left:686px;top:342px;width:223px;height:25px;background:#f4f4f4;border-radius:2px;box-shadow:inset 0 0 0 1px #efefef;"></div>
<div class="t" style="left:690.90px;top:349.50px;font-size:12.4px;color:#b3b3b3;transform:scaleX(0.9585);transform-origin:0 0;">Category</div>
<svg class="a" style="left:891px;top:353.3px" width="9.50" height="6.50" viewBox="0 0 10 7" preserveAspectRatio="none"><path d="M0 0 H10 L5 7 Z" fill="#b2b2b2"/></svg>
<div class="t" style="left:923.06px;top:327.35px;font-size:11.4px;color:#595959;transform:scaleX(0.9283);transform-origin:0 0;">THUMBNAIL IMAGE</div>
<div class="a" style="left:923px;top:342px;width:229px;height:25px;background:#f4f4f4;border-radius:2px;box-shadow:inset 0 0 0 1px #efefef;"></div>
<div class="t" style="left:926.94px;top:349.50px;font-size:12.4px;color:#1e1e1e;transform:scaleX(0.9483);transform-origin:0 0;">Photo_from_camera_$5/25/2021 4:14:</div>
<svg class="a" style="left:1138px;top:353.3px" width="9.00" height="6.50" viewBox="0 0 10 7" preserveAspectRatio="none"><path d="M0 0 H10 L5 7 Z" fill="#b2b2b2"/></svg>
<div class="t" style="left:442.68px;top:382.35px;font-size:11.4px;color:#595959;transform:scaleX(0.8730);transform-origin:0 0;">ITEM CLASS</div>
<div class="a" style="left:443px;top:397px;width:229px;height:25px;background:#f4f4f4;border-radius:2px;box-shadow:inset 0 0 0 1px #efefef;"></div>
<div class="t" style="left:446.48px;top:404.00px;font-size:12.4px;color:#1e1e1e;transform:scaleX(0.9584);transform-origin:0 0;">Amazon</div>
<svg class="a" style="left:655px;top:407.4px" width="9.30" height="6.40" viewBox="0 0 10 7" preserveAspectRatio="none"><path d="M0 0 H10 L5 7 Z" fill="#b2b2b2"/></svg>
<div class="t" style="left:442.57px;top:437.35px;font-size:11.4px;color:#595959;transform:scaleX(0.8875);transform-origin:0 0;">PRIMARY DESCRIPTION</div>
<div class="a" style="left:443px;top:452px;width:466px;height:80px;background:#f4f4f4;border-radius:2px;box-shadow:inset 0 0 0 1px #efefef;"></div>
<div class="t" style="left:450.81px;top:462.50px;font-size:12.4px;color:#1e1e1e;transform:scaleX(0.9945);transform-origin:0 0;">test</div>
<div class="t" style="left:442.94px;top:546.35px;font-size:11.4px;color:#595959;transform:scaleX(0.8825);transform-origin:0 0;">SECONDARY DESCRIPTION</div>
<div class="a" style="left:443px;top:562px;width:466px;height:80px;background:#f4f4f4;border-radius:2px;box-shadow:inset 0 0 0 1px #efefef;"></div>
<div class="t" style="left:450.67px;top:572.50px;font-size:12.4px;color:#1e1e1e;transform:scaleX(0.9693);transform-origin:0 0;">secondary description</div>
<div class="t" style="left:442.44px;top:657.35px;font-size:11.4px;color:#595959;transform:scaleX(0.9111);transform-origin:0 0;">INTERNAL NOTE</div>
<div class="a" style="left:443px;top:672px;width:709px;height:80px;background:#f4f4f4;border-radius:2px;box-shadow:inset 0 0 0 1px #efefef;"></div>
<div class="t" style="left:451.02px;top:682.50px;font-size:12.4px;color:#1e1e1e;transform:scaleX(0.9585);transform-origin:0 0;">this needs to be Full circle</div>
<div class="a" style="left:921.1px;top:452.5px;width:17px;height:17px;border-radius:50%;border:2px solid #035e9d"></div>
<div class="t" style="left:955.42px;top:453.50px;font-size:12.4px;color:#1e1e1e;transform:scaleX(0.9662);transform-origin:0 0;">Display by default</div>
<div class="a" style="left:921.1px;top:562.5px;width:17px;height:17px;border-radius:50%;border:2px solid #035e9d"></div>
<div class="a" style="left:925.4px;top:566.8px;width:8.4px;height:8.4px;border-radius:50%;background:#035e9d"></div>
<div class="t" style="left:955.42px;top:563.50px;font-size:12.4px;color:#1e1e1e;transform:scaleX(0.9662);transform-origin:0 0;">Display by default</div>
<div class="t" style="left:436.37px;top:786.66px;font-size:13.4px;color:#222;transform:scaleX(0.9133);transform-origin:0 0;">INVENTORY</div>
<div class="t" style="left:443.07px;top:829.35px;font-size:11.4px;color:#595959;transform:scaleX(0.8301);transform-origin:0 0;">SAFETY STOCK</div>
<div class="a" style="left:443px;top:845px;width:229px;height:25px;background:#f4f4f4;border-radius:2px;box-shadow:inset 0 0 0 1px #efefef;"></div>
<div class="t" style="left:450.52px;top:851.50px;font-size:12.4px;color:#1e1e1e;transform:scaleX(0.9990);transform-origin:0 0;">0</div>
<div class="t" style="left:655.18px;top:852.50px;font-size:12.4px;color:#1e1e1e;transform:scaleX(0.8066);transform-origin:0 0;">ea</div>
<div class="t" style="left:685.57px;top:829.35px;font-size:11.4px;color:#595959;transform:scaleX(0.9809);transform-origin:0 0;">ON HAND</div>
<div class="a" style="left:686px;top:845px;width:223px;height:25px;background:#f4f4f4;border-radius:2px;box-shadow:inset 0 0 0 1px #efefef;"></div>
<div class="t" style="left:694.12px;top:851.50px;font-size:12.4px;color:#a3a3a3;transform:scaleX(0.9223);transform-origin:0 0;">2,042.933</div>
<div class="t" style="left:891.85px;top:852.50px;font-size:12.4px;color:#1e1e1e;transform:scaleX(0.8518);transform-origin:0 0;">ea</div>
<div class="t" style="left:436.94px;top:904.66px;font-size:13.4px;color:#222;transform:scaleX(0.8762);transform-origin:0 0;">ECOMMERCE STOCK SETTINGS</div>
<div class="t" style="left:442.77px;top:933.35px;font-size:11.4px;color:#595959;transform:scaleX(0.8919);transform-origin:0 0;">POSTED TO CHANNEL</div>
<div class="a" style="left:443px;top:949px;width:236px;height:24px;background:#fafafa;border-radius:2px;border:1px solid #1c68a8;"></div>
<div class="t" style="left:448.96px;top:954.50px;font-size:12.4px;color:#1e1e1e;transform:scaleX(0.9990);transform-origin:0 0;">%</div>
<svg class="a" style="left:661px;top:959.2px" width="9.20" height="6.80" viewBox="0 0 10 7" preserveAspectRatio="none"><path d="M0 0 H10 L5 7 Z" fill="#005a9e"/></svg>
<div class="a" style="left:693px;top:949px;width:223px;height:25px;background:#f4f4f4;border-radius:2px;box-shadow:inset 0 0 0 1px #efefef;"></div>
<div class="a" style="left:429px;top:982px;width:1491px;height:1px;background:#e4e4e4;"></div>
<div class="a" style="left:437px;top:1006px;width:12px;height:12px;border-radius:50%;background:#c4c4c4"></div>
<div class="a" style="left:444px;top:975px;width:236px;height:52px;background:#fff;border:1px solid #8ea4b8;"></div>
<div class="a" style="left:449px;top:982px;width:226px;height:19px;background:#cde8f8;border:1px solid #3494e0;"></div>
<div class="t" style="left:454.46px;top:985.50px;font-size:12.4px;color:#111;transform:scaleX(0.9990);transform-origin:0 0;">%</div>
<div class="t" style="left:454.35px;top:1004.50px;font-size:12.4px;color:#111;transform:scaleX(0.8424);transform-origin:0 0;">Val.</div>
<div class="a" style="left:363px;top:876px;width:578px;height:159px;border:4px solid #ef5949;filter:drop-shadow(2px 2px 1.2px rgba(0,0,0,0.8))"></div>
<div class="a" style="left:1752px;top:999px;width:75px;height:25px;background:#ececec;border-radius:2px;"></div>
<div class="t" style="left:1767.14px;top:1005.67px;font-size:12.2px;color:#0b5c99;transform:scaleX(0.9078);transform-origin:0 0;">CANCEL</div>
<div class="a" style="left:1837px;top:999px;width:75px;height:25px;background:#035e9d;border-radius:2px;"></div>
<div class="t" style="left:1861.75px;top:1005.67px;font-size:12.2px;color:#fff;transform:scaleX(0.8166);transform-origin:0 0;">SAVE</div>
<div class="a" style="left:1909px;top:221px;width:7px;height:746px;background:#f1f1f1;"></div>
<svg class="a" style="left:1908px;top:162px" width="9" height="6" viewBox="0 0 9 6"><path d="M0.5 5 L4.5 1 L8.5 5" fill="none" stroke="#eeeeee" stroke-width="1"/></svg>
<svg class="a" style="left:1908px;top:972px" width="9" height="6" viewBox="0 0 9 6"><path d="M0.5 1 L4.5 5 L8.5 1" fill="none" stroke="#eeeeee" stroke-width="1"/></svg>
<div class="t" style="left:1181.69px;top:161.35px;font-size:11.4px;color:#595959;transform:scaleX(0.8608);transform-origin:0 0;">LAST COST</div>
<div class="a" style="left:1182px;top:176px;width:229px;height:25px;background:#f4f4f4;border-radius:2px;box-shadow:inset 0 0 0 1px #efefef;"></div>
<div class="t" style="left:1190.25px;top:183.50px;font-size:12.4px;color:#505050;font-weight:bold;transform:scaleX(0.9019);transform-origin:0 0;">$15.00</div>
<div class="t" style="left:1425.28px;top:161.35px;font-size:11.4px;color:#595959;transform:scaleX(0.8554);transform-origin:0 0;">AVERAGE COST</div>
<div class="a" style="left:1425px;top:176px;width:223px;height:25px;background:#f4f4f4;border-radius:2px;box-shadow:inset 0 0 0 1px #efefef;"></div>
<div class="t" style="left:1432.65px;top:183.50px;font-size:12.4px;color:#333;transform:scaleX(0.9013);transform-origin:0 0;">14.72512</div>
<div class="t" style="left:1661.70px;top:161.35px;font-size:11.4px;color:#595959;transform:scaleX(0.8577);transform-origin:0 0;">LIST COST</div>
<div class="a" style="left:1662px;top:176px;width:229px;height:25px;background:#f4f4f4;border-radius:2px;box-shadow:inset 0 0 0 1px #efefef;"></div>
<div class="t" style="left:1668.91px;top:184.00px;font-size:12.4px;color:#1e1e1e;transform:scaleX(0.9525);transform-origin:0 0;">20.00</div>
<div class="t" style="left:1182.28px;top:215.35px;font-size:11.4px;color:#595959;transform:scaleX(0.8761);transform-origin:0 0;">TAX CODE</div><svg class="a" style="left:1234.4px;top:213.5px" width="8" height="8" viewBox="0 0 8 8"><path d="M4 0.3 V4 M4 4 L0.6 2.9 M4 4 L7.4 2.9 M4 4 L1.9 7 M4 4 L6.1 7" stroke="#e53935" stroke-width="1.6"/></svg>
<div class="a" style="left:1182px;top:231px;width:229px;height:25px;background:#f4f4f4;border-radius:2px;box-shadow:inset 0 0 0 1px #efefef;"></div>
<div class="t" style="left:1187.08px;top:238.50px;font-size:12.4px;color:#1e1e1e;transform:scaleX(0.7898);transform-origin:0 0;">Tax</div>
<svg class="a" style="left:1397px;top:242px" width="9.00" height="6.30" viewBox="0 0 10 7" preserveAspectRatio="none"><path d="M0 0 H10 L5 7 Z" fill="#b2b2b2"/></svg>
<div class="t" style="left:1424.51px;top:215.35px;font-size:11.4px;color:#595959;transform:scaleX(0.8946);transform-origin:0 0;">UNIT OF MEASURE SET</div>
<div class="a" style="left:1425px;top:231px;width:223px;height:25px;background:#f4f4f4;border-radius:2px;box-shadow:inset 0 0 0 1px #efefef;"></div>
<div class="t" style="left:1433.15px;top:238.50px;font-size:12.4px;color:#505050;font-weight:bold;transform:scaleX(0.8864);transform-origin:0 0;">8 Pack</div>
<div class="t" style="left:1661.72px;top:215.35px;font-size:11.4px;color:#595959;transform:scaleX(0.8828);transform-origin:0 0;">UNIT OF MEASURE FOR PRICE LEVELS</div>
<div class="a" style="left:1662px;top:231px;width:229px;height:25px;background:#f4f4f4;border-radius:2px;box-shadow:inset 0 0 0 1px #efefef;"></div>
<div class="t" style="left:1666.54px;top:238.50px;font-size:12.4px;color:#1e1e1e;transform:scaleX(0.8820);transform-origin:0 0;">ea</div>
<svg class="a" style="left:1876.3px;top:242px" width="9.70" height="6.70" viewBox="0 0 10 7" preserveAspectRatio="none"><path d="M0 0 H10 L5 7 Z" fill="#b2b2b2"/></svg>
<div class="a" style="left:1182px;top:273px;width:709px;height:119px;background:#fff;border:1px solid #e4e4e4;"></div>
<div class="a" style="left:1183px;top:303px;width:707px;height:30px;background:#edf3f6;"></div>
<div class="a" style="left:1183px;top:362px;width:707px;height:29px;background:#edf3f6;"></div>
<div class="a" style="left:1183px;top:303px;width:707px;height:1px;background:#e9ecee;"></div>
<div class="a" style="left:1271px;top:274px;width:1px;height:117px;background:#e2e6e8;"></div>
<div class="a" style="left:1360px;top:274px;width:1px;height:117px;background:#e2e6e8;"></div>
<div class="a" style="left:1448px;top:274px;width:1px;height:117px;background:#e2e6e8;"></div>
<div class="a" style="left:1536px;top:274px;width:1px;height:117px;background:#e2e6e8;"></div>
<div class="a" style="left:1625px;top:274px;width:1px;height:117px;background:#e2e6e8;"></div>
<div class="a" style="left:1713px;top:274px;width:1px;height:117px;background:#e2e6e8;"></div>
<div class="a" style="left:1802px;top:274px;width:1px;height:117px;background:#e2e6e8;"></div>
<div class="t" style="left:1187.44px;top:282.50px;font-size:12.4px;color:#1e1e1e;transform:scaleX(0.9425);transform-origin:0 0;">Level</div>
<div class="t" style="left:1276.87px;top:282.50px;font-size:12.4px;color:#1e1e1e;transform:scaleX(0.9350);transform-origin:0 0;">Selling Price</div>
<div class="t" style="left:1364.55px;top:282.50px;font-size:12.4px;color:#1e1e1e;transform:scaleX(1.0310);transform-origin:0 0;">Margin</div>
<div class="t" style="left:1453.50px;top:282.50px;font-size:12.4px;color:#1e1e1e;transform:scaleX(0.8841);transform-origin:0 0;">Base</div>
<div class="t" style="left:1541.24px;top:282.50px;font-size:12.4px;color:#1e1e1e;transform:scaleX(0.9452);transform-origin:0 0;">Net Last</div>
<div class="t" style="left:1630.18px;top:282.50px;font-size:12.4px;color:#1e1e1e;transform:scaleX(1.0026);transform-origin:0 0;">Net Avg</div>
<div class="t" style="left:1718.30px;top:282.50px;font-size:12.4px;color:#1e1e1e;transform:scaleX(0.9823);transform-origin:0 0;">Discount</div>
<div class="t" style="left:1807.31px;top:282.50px;font-size:12.4px;color:#1e1e1e;transform:scaleX(0.9748);transform-origin:0 0;">Final</div>
<div class="t" style="left:1189.67px;top:313.50px;font-size:12.4px;color:#1e1e1e;transform:scaleX(0.9165);transform-origin:0 0;">Price Level A</div>
<div class="t" style="left:1278.42px;top:314.50px;font-size:12.4px;color:#1e1e1e;transform:scaleX(0.9323);transform-origin:0 0;">16.36124</div>
<div class="t" style="left:1366.01px;top:314.50px;font-size:12.4px;color:#1e1e1e;transform:scaleX(1.0434);transform-origin:0 0;">10</div>
<div class="t" style="left:1430.09px;top:312.50px;font-size:12.4px;color:#1e1e1e;transform:scaleX(0.9367);transform-origin:0 0;">%</div>
<div class="t" style="left:1459.28px;top:305.50px;font-size:12.4px;color:#1e1e1e;transform:scaleX(0.9362);transform-origin:0 0;">Average</div>
<div class="t" style="left:1458.70px;top:320.00px;font-size:12.4px;color:#1e1e1e;transform:scaleX(0.9485);transform-origin:0 0;">Cost</div>
<svg class="a" style="left:1518.7px;top:317px" width="9.10" height="6.70" viewBox="0 0 10 7" preserveAspectRatio="none"><path d="M0 0 H10 L5 7 Z" fill="#b2b2b2"/></svg>
<div class="t" style="left:1544.08px;top:313.50px;font-size:12.4px;color:#1e1e1e;transform:scaleX(0.9176);transform-origin:0 0;">$1.36124</div>
<div class="t" style="left:1632.48px;top:313.50px;font-size:12.4px;color:#1e1e1e;transform:scaleX(0.9281);transform-origin:0 0;">$1.63612</div>
<div class="t" style="left:1720.61px;top:314.50px;font-size:12.4px;color:#1e1e1e;transform:scaleX(0.9428);transform-origin:0 0;">13</div>
<div class="t" style="left:1780.50px;top:312.50px;font-size:12.4px;color:#1e1e1e;transform:scaleX(0.8973);transform-origin:0 0;">%</div>
<div class="t" style="left:1809.78px;top:313.50px;font-size:12.4px;color:#1e1e1e;transform:scaleX(0.9250);transform-origin:0 0;">$14.23428</div>
<div class="t" style="left:1189.66px;top:342.50px;font-size:12.4px;color:#1e1e1e;transform:scaleX(0.9246);transform-origin:0 0;">Price Level B</div>
<div class="t" style="left:1278.71px;top:343.50px;font-size:12.4px;color:#1e1e1e;transform:scaleX(0.9257);transform-origin:0 0;">73.6256</div>
<div class="t" style="left:1366.46px;top:343.50px;font-size:12.4px;color:#1e1e1e;transform:scaleX(1.0102);transform-origin:0 0;">80</div>
<div class="t" style="left:1430.09px;top:341.50px;font-size:12.4px;color:#1e1e1e;transform:scaleX(0.9367);transform-origin:0 0;">%</div>
<div class="t" style="left:1459.28px;top:334.50px;font-size:12.4px;color:#1e1e1e;transform:scaleX(0.9362);transform-origin:0 0;">Average</div>
<div class="t" style="left:1458.70px;top:349.00px;font-size:12.4px;color:#1e1e1e;transform:scaleX(0.9485);transform-origin:0 0;">Cost</div>
<svg class="a" style="left:1518.7px;top:346px" width="9.10" height="6.70" viewBox="0 0 10 7" preserveAspectRatio="none"><path d="M0 0 H10 L5 7 Z" fill="#b2b2b2"/></svg>
<div class="t" style="left:1544.08px;top:342.50px;font-size:12.4px;color:#1e1e1e;transform:scaleX(0.9208);transform-origin:0 0;">$58.6256</div>
<div class="t" style="left:1632.48px;top:342.50px;font-size:12.4px;color:#1e1e1e;transform:scaleX(0.9285);transform-origin:0 0;">$58.90048</div>
<div class="t" style="left:1720.61px;top:343.50px;font-size:12.4px;color:#1e1e1e;transform:scaleX(0.9428);transform-origin:0 0;">13</div>
<div class="t" style="left:1780.50px;top:341.50px;font-size:12.4px;color:#1e1e1e;transform:scaleX(0.8973);transform-origin:0 0;">%</div>
<div class="t" style="left:1809.78px;top:342.50px;font-size:12.4px;color:#1e1e1e;transform:scaleX(0.9264);transform-origin:0 0;">$64.05427</div>
<div class="t" style="left:1189.67px;top:371.50px;font-size:12.4px;color:#1e1e1e;transform:scaleX(0.9135);transform-origin:0 0;">Price Level C</div>
<div class="t" style="left:1278.72px;top:372.50px;font-size:12.4px;color:#1e1e1e;transform:scaleX(0.9264);transform-origin:0 0;">29.45024</div>
<div class="t" style="left:1366.50px;top:372.50px;font-size:12.4px;color:#1e1e1e;transform:scaleX(1.0069);transform-origin:0 0;">50</div>
<div class="t" style="left:1430.09px;top:370.50px;font-size:12.4px;color:#1e1e1e;transform:scaleX(0.9367);transform-origin:0 0;">%</div>
<div class="t" style="left:1459.28px;top:363.50px;font-size:12.4px;color:#1e1e1e;transform:scaleX(0.9362);transform-origin:0 0;">Average</div>
<div class="t" style="left:1458.70px;top:378.00px;font-size:12.4px;color:#1e1e1e;transform:scaleX(0.9485);transform-origin:0 0;">Cost</div>
<svg class="a" style="left:1518.7px;top:375px" width="9.10" height="6.70" viewBox="0 0 10 7" preserveAspectRatio="none"><path d="M0 0 H10 L5 7 Z" fill="#b2b2b2"/></svg>
<div class="t" style="left:1544.08px;top:371.50px;font-size:12.4px;color:#1e1e1e;transform:scaleX(0.9257);transform-origin:0 0;">$14.45024</div>
<div class="t" style="left:1632.48px;top:371.50px;font-size:12.4px;color:#1e1e1e;transform:scaleX(0.9299);transform-origin:0 0;">$14.72512</div>
<div class="t" style="left:1720.61px;top:372.50px;font-size:12.4px;color:#1e1e1e;transform:scaleX(0.9428);transform-origin:0 0;">13</div>
<div class="t" style="left:1780.50px;top:370.50px;font-size:12.4px;color:#1e1e1e;transform:scaleX(0.8973);transform-origin:0 0;">%</div>
<div class="t" style="left:1809.78px;top:371.50px;font-size:12.4px;color:#1e1e1e;transform:scaleX(0.9175);transform-origin:0 0;">$25.62171</div>
<div class="a" style="left:1182px;top:408.4px;width:24px;height:7.2000000000000455px;background:#e6e6e6;border-radius:4px;"></div><div class="a" style="left:1182px;top:406px;width:12px;height:12px;border-radius:50%;background:#c4c4c4"></div>
<div class="t" style="left:1215.62px;top:405.50px;font-size:12.4px;color:#1e1e1e;transform:scaleX(0.9226);transform-origin:0 0;">Use Current Price Level Over Vendor</div>
<div class="a" style="left:1182px;top:435.4px;width:24px;height:7.2000000000000455px;background:#e6e6e6;border-radius:4px;"></div><div class="a" style="left:1182px;top:433px;width:12px;height:12px;border-radius:50%;background:#c4c4c4"></div>
<div class="t" style="left:1215.62px;top:432.50px;font-size:12.4px;color:#1e1e1e;transform:scaleX(0.9212);transform-origin:0 0;">Use List Cost Percent</div>
<div class="a" style="left:1748px;top:408.4px;width:24px;height:7.2000000000000455px;background:#c6d6f7;border-radius:4px;"></div><div class="a" style="left:1760px;top:406px;width:12px;height:12px;border-radius:50%;background:#035e9d"></div>
<div class="t" style="left:1779.56px;top:405.50px;font-size:12.4px;color:#1e1e1e;transform:scaleX(0.9278);transform-origin:0 0;">Purchase In SO Uom</div>
<div class="t" style="left:1175.64px;top:480.66px;font-size:13.4px;color:#222;transform:scaleX(0.8756);transform-origin:0 0;">PRICE EXCEPTION</div>
<div class="t" style="left:1543.16px;top:480.66px;font-size:13.4px;color:#222;transform:scaleX(0.8551);transform-origin:0 0;">RESTOCKING FEE</div>
<div class="t" style="left:1181.77px;top:521.35px;font-size:11.4px;color:#595959;transform:scaleX(0.8927);transform-origin:0 0;">DISCOUNT PRICE</div>
<div class="a" style="left:1182px;top:536px;width:160px;height:25px;background:#f4f4f4;border-radius:2px;box-shadow:inset 0 0 0 1px #efefef;"></div>
<div class="t" style="left:1187.25px;top:542.50px;font-size:12.4px;color:#1e1e1e;transform:scaleX(0.8771);transform-origin:0 0;">Val.</div>
<svg class="a" style="left:1324.7px;top:545.8px" width="9.30" height="7.10" viewBox="0 0 10 7" preserveAspectRatio="none"><path d="M0 0 H10 L5 7 Z" fill="#b2b2b2"/></svg>
<div class="a" style="left:1356px;top:536px;width:161px;height:25px;background:#f4f4f4;border-radius:2px;box-shadow:inset 0 0 0 1px #efefef;"></div>
<div class="t" style="left:1181.76px;top:573.35px;font-size:11.4px;color:#595959;transform:scaleX(0.9011);transform-origin:0 0;">DISCOUNT DATE RANGE</div>
<div class="a" style="left:1182px;top:588px;width:160px;height:25px;background:#f4f4f4;border-radius:2px;box-shadow:inset 0 0 0 1px #efefef;"></div>
<div class="t" style="left:1188.46px;top:594.50px;font-size:12.4px;color:#b5b5b5;transform:scaleX(0.9629);transform-origin:0 0;">Start date</div>
<div class="a" style="left:1356px;top:588px;width:161px;height:25px;background:#f4f4f4;border-radius:2px;box-shadow:inset 0 0 0 1px #efefef;"></div>
<div class="t" style="left:1362.73px;top:594.50px;font-size:12.4px;color:#b5b5b5;transform:scaleX(0.9569);transform-origin:0 0;">End date</div>
<div class="a" style="left:1346px;top:601px;width:6px;height:1px;background:#333;"></div>
<svg class="a" style="left:1324px;top:593px" width="15" height="16" viewBox="0 0 15 16"><rect x="0.5" y="2" width="14" height="13.5" rx="1" fill="none" stroke="#e4e4e4" stroke-width="1"/><rect x="0.5" y="2" width="14" height="3" fill="#e4e4e4"/><path d="M3.5 0.5 V3 M11.5 0.5 V3" stroke="#e4e4e4" stroke-width="1.2"/><path d="M3 9 H4.5 M6.8 9 H8.3 M10.5 9 H12" stroke="#e8e8e8" stroke-width="1"/></svg>
<svg class="a" style="left:1498.5px;top:593px" width="15" height="16" viewBox="0 0 15 16"><rect x="0.5" y="2" width="14" height="13.5" rx="1" fill="none" stroke="#e4e4e4" stroke-width="1"/><rect x="0.5" y="2" width="14" height="3" fill="#e4e4e4"/><path d="M3.5 0.5 V3 M11.5 0.5 V3" stroke="#e4e4e4" stroke-width="1.2"/><path d="M3 9 H4.5 M6.8 9 H8.3 M10.5 9 H12" stroke="#e8e8e8" stroke-width="1"/></svg>
<div class="a" style="left:1552px;top:516.6999999999999px;width:23px;height:7.2000000000000455px;background:#c6d6f7;border-radius:4px;"></div><div class="a" style="left:1563.7px;top:514.3px;width:12px;height:12px;border-radius:50%;background:#035e9d"></div>
<div class="t" style="left:1583.66px;top:514.50px;font-size:12.4px;color:#1e1e1e;transform:scaleX(0.9207);transform-origin:0 0;">Enable Restocking Fee</div>
<div class="a" style="left:1551px;top:537px;width:161px;height:23px;background:#f4f4f4;border-radius:2px;box-shadow:inset 0 0 0 1px #efefef;"></div>
<div class="t" style="left:1555.25px;top:542.50px;font-size:12.4px;color:#1e1e1e;transform:scaleX(0.8840);transform-origin:0 0;">Value</div>
<svg class="a" style="left:1694.4px;top:546px" width="9.60" height="6.70" viewBox="0 0 10 7" preserveAspectRatio="none"><path d="M0 0 H10 L5 7 Z" fill="#b2b2b2"/></svg>
<div class="a" style="left:1727px;top:536px;width:164px;height:24px;background:#f4f4f4;border-radius:2px;box-shadow:inset 0 0 0 1px #efefef;"></div>
<div class="t" style="left:1175.87px;top:647.66px;font-size:13.4px;color:#222;transform:scaleX(0.8756);transform-origin:0 0;">SETTINGS</div>
<div class="t" style="left:1175.45px;top:673.35px;font-size:11.4px;color:#5f5f5f;transform:scaleX(1.0117);transform-origin:0 0;">Require Customer Acknowledgement</div>
<div class="a" style="left:1176px;top:688px;width:350px;height:25px;background:#f4f4f4;border-radius:2px;box-shadow:inset 0 0 0 1px #efefef;"></div>
<div class="t" style="left:1180.61px;top:694.50px;font-size:12.4px;color:#1e1e1e;transform:scaleX(0.9698);transform-origin:0 0;">Not Require Acknowledgement</div>
<svg class="a" style="left:1508.2px;top:697.8px" width="9.70" height="7.20" viewBox="0 0 10 7" preserveAspectRatio="none"><path d="M0 0 H10 L5 7 Z" fill="#b2b2b2"/></svg>
<div class="t" style="left:1536.47px;top:673.35px;font-size:11.4px;color:#595959;transform:scaleX(0.8891);transform-origin:0 0;">MERGE ITEMS IN PO CREATED FROM PO REQUESTS</div>
<div class="a" style="left:1537px;top:688px;width:360px;height:25px;background:#f4f4f4;border-radius:2px;box-shadow:inset 0 0 0 1px #efefef;"></div>
<svg class="a" style="left:1879px;top:697.8px" width="9.60" height="7.20" viewBox="0 0 10 7" preserveAspectRatio="none"><path d="M0 0 H10 L5 7 Z" fill="#b2b2b2"/></svg>
<div class="a" style="left:1176px;top:725.0px;width:24px;height:7.2000000000000455px;background:#e6e6e6;border-radius:4px;"></div><div class="a" style="left:1176px;top:722.6px;width:12px;height:12px;border-radius:50%;background:#c4c4c4"></div>
<div class="t" style="left:1210.24px;top:722.50px;font-size:12.4px;color:#1e1e1e;transform:scaleX(0.9270);transform-origin:0 0;">Trackable Item</div>
<div class="a" style="left:1178px;top:747.8px;width:24px;height:7.2000000000000455px;background:#c6d6f7;border-radius:4px;"></div><div class="a" style="left:1190px;top:745.4px;width:12px;height:12px;border-radius:50%;background:#035e9d"></div>
<div class="t" style="left:1209.94px;top:745.50px;font-size:12.4px;color:#1e1e1e;transform:scaleX(0.9518);transform-origin:0 0;">Orderable</div>
<div class="t" style="left:1175.55px;top:769.35px;font-size:11.4px;color:#595959;transform:scaleX(0.9072);transform-origin:0 0;">LEAD TIME</div>
<div class="a" style="left:1176px;top:784px;width:350px;height:25px;background:#f4f4f4;border-radius:2px;box-shadow:inset 0 0 0 1px #efefef;"></div>
<div class="t" style="left:1181.60px;top:790.50px;font-size:12.4px;color:#b5b5b5;transform:scaleX(0.8841);transform-origin:0 0;">LEAD TIME</div>
</body></html>
